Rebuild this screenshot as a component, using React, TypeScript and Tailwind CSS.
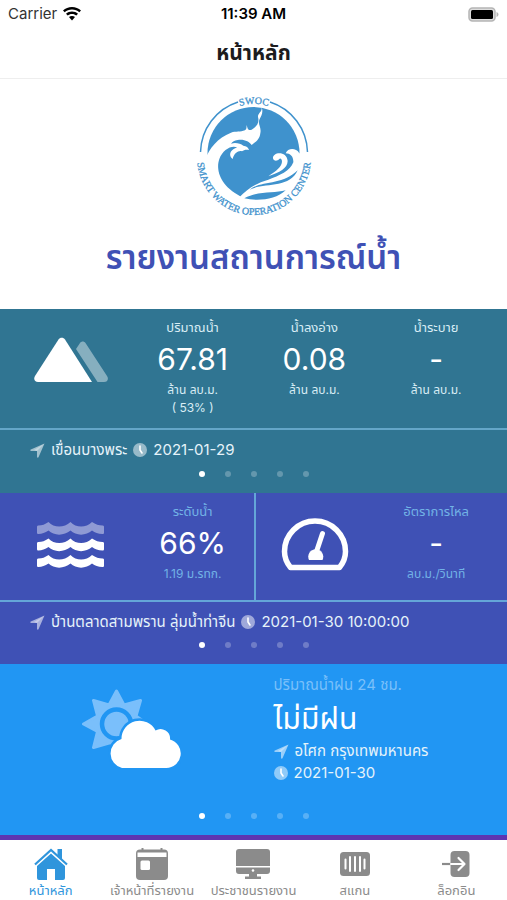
import React from "react";

/* =====================
   Types
===================== */

interface Reading {
    label: string;
    value: string;
    units: string[];
}

interface TabItem {
    label: string;
    icon: React.ReactNode;
    active?: boolean;
}

/* =====================
   Icons
===================== */

const WifiIcon = () => (
    <svg width="18" height="14" viewBox="0 0 18 14" fill="#000" aria-hidden="true">
        <path d="M9 0C5.500 0 2.400 1.300 0 3.500L1.700 5.300C3.600 3.500 6.200 2.500 9 2.500s5.400 1 7.300 2.800L18 3.500C15.600 1.300 12.500 0 9 0Z" />
        <path d="M9 4.500c-2.300 0-4.400.9-6 2.300l1.700 1.800C5.800 7.500 7.300 6.900 9 6.900s3.200.6 4.300 1.700L15 6.800C13.400 5.400 11.300 4.500 9 4.500Z" />
        <path d="M9 8.900c-1.200 0-2.200.4-3 1.100L9 13.600l3-3.600c-.8-.7-1.800-1.100-3-1.100Z" />
    </svg>
);

const BatteryIcon = () => (
    <svg width="31" height="15" viewBox="0 0 31 15" aria-hidden="true">
        <rect x="1" y="1" width="26" height="13" rx="3.500" fill="#ddd" stroke="#b5b5b5" strokeWidth="1.500" />
        <rect x="3" y="3" width="22" height="9" rx="1.500" fill="#000" />
        <path d="M28.500 5v5c1.200-.4 2-1.300 2-2.500s-.8-2.100-2-2.500Z" fill="#b5b5b5" />
    </svg>
);

const Logo = () => (
    <svg width="126" height="126" viewBox="0 0 126 126" role="img" aria-label="SWOC Smart Water Operation Center">
        <defs>
            <path id="logo-top" d="M12 62a51 51 0 0 1 102 0" />
            <path id="logo-bottom" d="M6 61v3a57 58 0 0 0 114 0v-3" />
        </defs>
        <circle cx="62.500" cy="60" r="46" fill="#3f92cd" />
        <path d="M9.500 59A54 54 0 0 1 47 9" fill="none" stroke="#3f92cd" strokeWidth="1.500" />
        <path d="M79 9A54 54 0 0 1 116.500 59" fill="none" stroke="#3f92cd" strokeWidth="1.500" />
        <g transform="translate(-10 -8) scale(.3333)">
            {/* Naga */}
            <path
                d="M72 225C85 190 110 158 150 143C165 138 178 142 192 136C198 132 196 127 197 120C200 130 200 138 212 134C228 125 236 112 231 96C230 84 244 82 242 66C248 84 240 94 235 104C230 120 242 126 238 145C236 165 222 172 212 180C205 170 190 162 170 165C160 167 155 170 150 176C165 172 178 176 187 182C195 184 202 186 204 195C195 193 188 195 183 199C172 196 160 204 155 222C144 214 145 200 158 192C165 188 168 188 168 187C150 180 125 195 115 222C105 250 112 300 180 335L150 356C95 336 60 280 72 225Z"
                fill="#fff"
            />
            {/* Waves */}
            <path
                d="M354 203C345 188 320 188 314 205C328 205 338 215 337 232C328 258 295 272 262 284C225 294 195 315 176 336L165 350C260 370 355 320 368 215Z"
                fill="#fff"
            />
            <path
                d="M276 220C274 200 318 196 320 228C320 250 295 262 262 274C285 258 304 245 303 228C302 220 297 218 294 223C288 230 277 228 276 220Z"
                fill="#fff"
            />
            <path d="M206 314C240 286 305 302 350 256C325 312 250 292 206 314Z" fill="#3f92cd" />
            <path d="M190 340C235 316 280 326 314 316C285 344 230 350 190 340Z" fill="#3f92cd" />
        </g>
        <g
            fill="#3f92cd"
            stroke="#3f92cd"
            strokeWidth=".3"
            fontFamily="'Liberation Serif', serif"
            fontSize="10"
        >
            <text textAnchor="middle">
                <textPath href="#logo-top" startOffset="50%">
                    SWOC
                </textPath>
            </text>
            <text textAnchor="middle">
                <textPath href="#logo-bottom" startOffset="50%">
                    SMART WATER OPERATION CENTER
                </textPath>
            </text>
        </g>
    </svg>
);

const MountainIcon = () => (
    <svg width="74" height="46" viewBox="0 0 74 46" aria-hidden="true">
        <path
            d="M24.500 2.500C26 .2 29.500.2 31 2.500L58 45H4C.8 45-.8 42 1 39Z"
            fill="#fff"
        />
        <path
            d="M42 12l4-6c1.500-2 4-2 5.500 0l21.500 33c2 3 .5 6-3 6h-6.500Z"
            fill="#fff"
            opacity=".42"
        />
    </svg>
);

const WATER_BAND =
    "M0 5C0 4 .5 3.500 1.500 3.500C5 3.500 8 2.500 11.500 0C17 6 27 6 33.500 0C39 6 49 6 55 0C58.500 2.500 62 3.500 65.500 3.500C66.500 3.500 67 4 67 5V10.500C67 11.500 66.500 12 65.500 12C61 12 58 10.500 55 8.500C49 14 39 14 33.500 8.500C27 14 17 14 11.500 8.500C8 10.500 5 12 1.500 12C.5 12 0 11.500 0 10.500Z";

const WaterIcon = () => (
    <svg width="67" height="47" viewBox="0 0 67 47" fill="#fff" aria-hidden="true">
        <path d={WATER_BAND} opacity=".42" />
        <path d={WATER_BAND} transform="translate(0 16.500)" />
        <path d={WATER_BAND} transform="translate(0 33)" />
    </svg>
);

const GaugeIcon = () => (
    <svg width="68" height="54" viewBox="0 0 68 54" aria-hidden="true">
        <path
            d="M9.500 49.500C5 44 3.500 39 3.500 33.500a30.500 30.500 0 0 1 61 0c0 5.500-1.500 10.500-6 16Z"
            fill="none"
            stroke="#fff"
            strokeWidth="5.500"
            strokeLinejoin="round"
        />
        <path d="M41.500 15.500L35 35" stroke="#fff" strokeWidth="5" strokeLinecap="round" />
        <path d="M28 42a7.500 7.500 0 1 1 13.500 0Z" fill="#fff" />
    </svg>
);

const SunCloudIcon = () => (
    <svg width="99" height="80" viewBox="0 0 99 80" aria-hidden="true">
        <g fill="#7abffb" stroke="#7abffb" strokeWidth="3" strokeLinejoin="round">
            <path d="M34.500 2L42 16L58.500 11.500L54 27L65 35L54 43L43 54L27 54L11.500 58.500L15.500 42.500L1.500 35L15.500 27L11.500 11.500L27 16Z" />
        </g>
        <circle cx="34.500" cy="35" r="14.500" fill="#7abffb" stroke="#2196f3" strokeWidth="4.500" />
        <path
            d="M40 79a15 15 0 0 1-.5-29a18 18 0 0 1 34-8.500a9.500 9.500 0 0 1 14.500 9A14.500 14.500 0 0 1 84 79Z"
            fill="#fff"
            stroke="#2196f3"
            strokeWidth="5"
            paintOrder="stroke"
        />
    </svg>
);

const LocationIcon = () => (
    <svg width="15" height="15" viewBox="0 0 15 15" fill="#fff" aria-hidden="true" className="shrink-0">
        <path d="M14.500.5L8.500 14.200C8.200 14.900 7 14.700 7 13.900V8H1C.2 8 .1 6.900.8 6.600Z" opacity=".55" />
        <path d="M14 1L7 8L4 7Z" opacity=".35" />
    </svg>
);

const ClockIcon = () => (
    <svg width="14" height="14" viewBox="0 0 14 14" aria-hidden="true" className="shrink-0">
        <circle cx="7" cy="7" r="7" fill="#fff" opacity=".5" />
        <path d="M7 3v4l2 3" fill="none" stroke="#fff" strokeWidth="1.600" strokeLinecap="round" />
    </svg>
);

const HomeIcon = () => (
    <svg width="34" height="32" viewBox="0 0 34 32" fill="#2f95dc" aria-hidden="true">
        <path d="M23.500 1H28v11l-4.500-4Z" />
        <path d="M1 16.500L17 2L33 16.500" fill="none" stroke="#2f95dc" strokeWidth="2.200" />
        <path d="M17 5.500L31 18v12a2 2 0 0 1-2 2h-8V21h-8v11H5a2 2 0 0 1-2-2V18Z" />
    </svg>
);

const CalendarIcon = () => (
    <svg width="32" height="32" viewBox="0 0 32 32" aria-hidden="true">
        <path d="M6.500 0v4M25.500 0v4" stroke="#8b8b8b" strokeWidth="2" />
        <rect y="1.500" width="32" height="30.500" rx="4" fill="#8b8b8b" />
        <path d="M1.500 4.500h29V9h-29Z" fill="#fff" />
        <rect x="4.500" y="12.500" width="9.500" height="9.500" rx="1.500" fill="#fff" />
    </svg>
);

const DesktopIcon = () => (
    <svg width="34" height="30" viewBox="0 0 34 30" fill="#8b8b8b" aria-hidden="true">
        <path d="M3 0h28a3 3 0 0 1 3 3v14H0V3a3 3 0 0 1 3-3Z" />
        <path d="M0 18.500h34V22a3 3 0 0 1-3 3h-10v2.500h4V30H9v-2.500h4V25H3a3 3 0 0 1-3-3Z" />
        <circle cx="17" cy="21.500" r="1.300" fill="#fff" />
    </svg>
);

const BarcodeIcon = () => (
    <svg width="30" height="24" viewBox="0 0 30 24" aria-hidden="true">
        <rect width="30" height="24" rx="3.500" fill="#8b8b8b" />
        <path
            d="M5.500 7.500v9M10 5v14M15 5v14M20 5v14M24.500 7.500v9"
            stroke="#fff"
            strokeWidth="2"
            strokeLinecap="round"
        />
    </svg>
);

const LoginIcon = () => (
    <svg width="28" height="26" viewBox="0 0 28 26" fill="none" aria-hidden="true">
        <rect x="8.500" width="19" height="26" rx="4" fill="#8b8b8b" />
        <path d="M0 13h9" stroke="#8b8b8b" strokeWidth="2.200" />
        <path d="M9 13h13M16.500 7l6 6l-6 6" stroke="#fff" strokeWidth="2.200" strokeLinecap="round" strokeLinejoin="round" />
    </svg>
);

/* =====================
   Shared parts
===================== */

const ReadingColumn: React.FC<{ reading: Reading; tone: string }> = ({ reading, tone }) => (
    <div className="text-center whitespace-nowrap">
        <p className={`text-[13px] leading-5 ${tone}`}>{reading.label}</p>
        <p className="text-3xl leading-[44px] text-white">{reading.value}</p>
        {reading.units.map((unit) => (
            <p key={unit} className={`text-xs leading-[18px] ${tone}`}>
                {unit}
            </p>
        ))}
    </div>
);

const PlaceLine: React.FC<{ place: string; date: string }> = ({ place, date }) => (
    <p className="flex items-center gap-1.5 px-[30px] text-[15px] leading-5 text-[#e6f3fa] whitespace-nowrap">
        <LocationIcon />
        <span>{place}</span>
        <ClockIcon />
        <span>{date}</span>
    </p>
);

const Dots: React.FC<{ name: string }> = ({ name }) => (
    <div className="flex justify-center gap-5">
        {[1, 2, 3, 4, 5].map((page) => (
            <button
                key={page}
                type="button"
                aria-label={`${name} ${page}`}
                className={`size-1.5 rounded-full ${page === 1 ? "bg-white" : "bg-white/25"}`}
            />
        ))}
    </div>
);

/* =====================
   Data
===================== */

const damReadings: Reading[] = [
    { label: "ปริมาณน้ำ", value: "67.81", units: ["ล้าน ลบ.ม.", "( 53% )"] },
    { label: "น้ำลงอ่าง", value: "0.08", units: ["ล้าน ลบ.ม."] },
    { label: "น้ำระบาย", value: "-", units: ["ล้าน ลบ.ม."] },
];

const levelReading: Reading = { label: "ระดับน้ำ", value: "66%", units: ["1.19 ม.รทก."] };
const flowReading: Reading = { label: "อัตราการไหล", value: "-", units: ["ลบ.ม./วินาที"] };

const tabs: TabItem[] = [
    { label: "หน้าหลัก", icon: <HomeIcon />, active: true },
    { label: "เจ้าหน้าที่รายงาน", icon: <CalendarIcon /> },
    { label: "ประชาชนรายงาน", icon: <DesktopIcon /> },
    { label: "สแกน", icon: <BarcodeIcon /> },
    { label: "ล็อกอิน", icon: <LoginIcon /> },
];

/* =====================
   Component
===================== */

const App: React.FC = () => {
    return (
        <div className="flex min-h-screen flex-col bg-white font-['Inter','Noto_Sans_Thai','Noto_Sans',sans-serif]">
            {/* Status bar */}
            <div className="grid grid-cols-3 items-center px-2 h-7 text-[15px] text-black">
                <div className="flex items-center gap-1.5 text-[#333]">
                    <span>Carrier</span>
                    <WifiIcon />
                </div>
                <span className="text-center text-[15px] font-semibold">11:39 AM</span>
                <div className="flex justify-end">
                    <BatteryIcon />
                </div>
            </div>

            {/* Header */}
            <header className="flex h-[51px] items-center justify-center border-b border-[#eee]">
                <h1 className="text-[21px] font-bold text-[#1c1c1e]">หน้าหลัก</h1>
            </header>

            <main className="flex grow flex-col">
                <div className="flex flex-col items-center pt-[14px] pb-7">
                    <Logo />
                    <h2 className="mt-3.5 text-[33px] leading-[48px] font-semibold text-[#3f51b5] whitespace-nowrap">
                        รายงานสถานการณ์น้ำ
                    </h2>
                </div>

                {/* Dam */}
                <section className="bg-[#307592] pb-4">
                    <div className="grid grid-cols-4 border-b-2 border-[#64a6c8] px-2.5 pt-2 pb-[11px]">
                        <div className="flex justify-center pt-5">
                            <MountainIcon />
                        </div>
                        {damReadings.map((reading) => (
                            <ReadingColumn key={reading.label} reading={reading} tone="text-[#d9edf5]" />
                        ))}
                    </div>
                    <div className="flex flex-col gap-[11px] pt-2.5">
                        <PlaceLine place="เขื่อนบางพระ" date="2021-01-29" />
                        <Dots name="เขื่อน" />
                    </div>
                </section>

                {/* River level and flow */}
                <section className="bg-[#3f51b5] pb-4">
                    <div className="grid grid-cols-4 border-b-2 border-[#64a6d8] px-2.5">
                        <div className="flex justify-center pt-[29px]">
                            <WaterIcon />
                        </div>
                        <div className="pt-2 pb-[17px]">
                            <ReadingColumn reading={levelReading} tone="text-[#72b3e6]" />
                        </div>
                        <div className="flex justify-center border-l-2 border-[#64a6d8] pt-[25px]">
                            <GaugeIcon />
                        </div>
                        <div className="pt-2 pb-[17px]">
                            <ReadingColumn reading={flowReading} tone="text-[#72b3e6]" />
                        </div>
                    </div>
                    <div className="flex flex-col gap-2.5 pt-2.5">
                        <PlaceLine place="บ้านตลาดสามพราน ลุ่มน้ำท่าจีน" date="2021-01-30 10:00:00" />
                        <Dots name="แม่น้ำ" />
                    </div>
                </section>

                {/* Rain */}
                <section className="bg-[#2196f3] pb-4">
                    <div className="grid grid-cols-2 px-2.5">
                        <div className="flex justify-center pt-[25px]">
                            <SunCloudIcon />
                        </div>
                        <div className="pt-2.5 pb-[29px] pl-5 whitespace-nowrap">
                            <p className="text-[15px] leading-[22px] text-[#7ac0fa]">ปริมาณน้ำฝน 24 ชม.</p>
                            <p className="text-3xl leading-[44px] text-white">ไม่มีฝน</p>
                            <p className="flex items-center gap-1.5 text-[15px] leading-[22px] text-[#e6f3fa]">
                                <LocationIcon />
                                <span>อโศก กรุงเทพมหานคร</span>
                            </p>
                            <p className="flex items-center gap-1.5 text-[15px] leading-[22px] text-[#e6f3fa]">
                                <ClockIcon />
                                <span>2021-01-30</span>
                            </p>
                        </div>
                    </div>
                    <Dots name="ฝน" />
                </section>

                <div className="min-h-1 grow bg-[#5e35b1]" />
            </main>

            {/* Tab bar */}
            <nav className="grid h-[60px] grid-cols-5 bg-white">
                {tabs.map((tab) => (
                    <a
                        key={tab.label}
                        href="#"
                        aria-current={tab.active ? "page" : undefined}
                        className={`flex flex-col items-center pt-2 text-[13px] leading-4 whitespace-nowrap ${
                            tab.active ? "text-[#2f95dc]" : "text-[#8b8b8b]"
                        }`}
                    >
                        <span className="flex h-8 items-center">{tab.icon}</span>
                        <span className="mt-0.5">{tab.label}</span>
                    </a>
                ))}
            </nav>
        </div>
    );
};

export default App;
